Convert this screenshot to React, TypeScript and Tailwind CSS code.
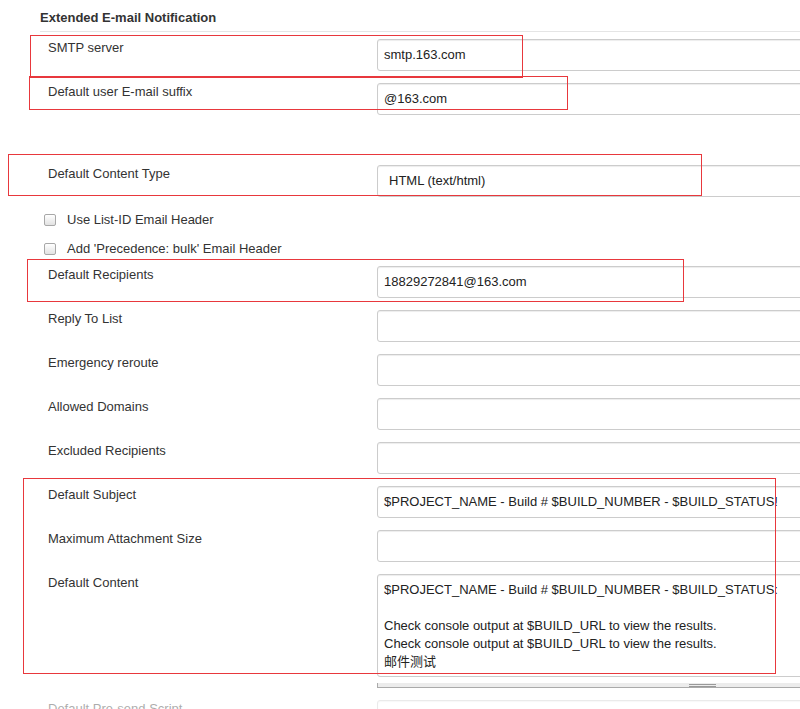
import React from 'react';

const inputCls =
  'h-[32px] flex-1 border border-[#ccc] rounded-[3px] bg-white px-[6px] flex items-center text-[#222] shadow-[inset_0_1px_1px_rgba(0,0,0,0.075)] whitespace-nowrap';

type RowProps = { label: string; value?: string; className?: string; select?: boolean };

const Row = ({ label, value, className, select }: RowProps) => (
  <div className={`flex items-start ${className ?? ''}`}>
    <div className="w-[377px] shrink-0 pl-[48px] pt-[1px] leading-[16px]">{label}</div>
    <div className={`${inputCls} ${select ? 'h-[30px] pl-[11px]' : ''}`}>{value}</div>
  </div>
);

const CheckRow = ({ label, className }: { label: string; className?: string }) => (
  <div className={`flex items-center pl-[44px] leading-[16px] ${className ?? ''}`}>
    <span className="w-[12px] h-[12px] rounded-[2px] border border-[#a8a8a8] bg-gradient-to-b from-white to-[#e2e2e2]" />
    <span className="ml-[11px]">{label}</span>
  </div>
);

// annotation boxes drawn over the form
const marks = [
  'left-[30px] top-[35px] w-[493px] h-[43px]',
  'left-[29px] top-[76px] w-[539px] h-[34px]',
  'left-[8px] top-[154px] w-[694px] h-[42px]',
  'left-[27px] top-[259px] w-[657px] h-[43px]',
  'left-[23px] top-[478px] w-[753px] h-[196px]',
];

export default function App() {
  return (
    <div className="relative w-[800px] h-[709px] overflow-hidden bg-white font-['Liberation_Sans',Arial,sans-serif] text-[13px] text-[#333]">
      <div className="w-[860px]">
        <div className="ml-[40px] pt-[10px] pb-[5px] leading-[16px] font-bold border-b border-[#e5e5e5]">
          Extended E-mail Notification
        </div>

        <Row className="mt-[7px]" label="SMTP server" value="smtp.163.com" />
        <Row className="mt-[12px]" label="Default user E-mail suffix" value="@163.com" />

        <Row className="mt-[50px]" label="Default Content Type" value="HTML (text/html)" select />

        <CheckRow className="mt-[15px]" label="Use List-ID Email Header" />
        <CheckRow className="mt-[13px]" label="Add 'Precedence: bulk' Email Header" />

        <Row className="mt-[9px]" label="Default Recipients" value="18829272841@163.com" />
        <Row className="mt-[12px]" label="Reply To List" />
        <Row className="mt-[12px]" label="Emergency reroute" />
        <Row className="mt-[12px]" label="Allowed Domains" />
        <Row className="mt-[12px]" label="Excluded Recipients" />
        <Row className="mt-[12px]" label="Default Subject" value="$PROJECT_NAME - Build # $BUILD_NUMBER - $BUILD_STATUS!" />
        <Row className="mt-[12px]" label="Maximum Attachment Size" />

        <div className="flex items-start mt-[12px]">
          <div className="w-[377px] shrink-0 pl-[48px] pt-[1px] leading-[16px]">Default Content</div>
          <div className="flex-1">
            <div className="h-[103px] border border-[#ccc] rounded-[3px] px-[6px] pt-[6px] leading-[18px] text-[#222] shadow-[inset_0_1px_1px_rgba(0,0,0,0.075)] whitespace-nowrap">
              <div>$PROJECT_NAME - Build # $BUILD_NUMBER - $BUILD_STATUS:</div>
              <div className="h-[18px]" />
              <div>Check console output at $BUILD_URL to view the results.</div>
              <div>Check console output at $BUILD_URL to view the results.</div>
              <div className="font-['Liberation_Sans','Noto_Sans_CJK_SC',sans-serif]">邮件测试</div>
            </div>
            <div className="relative mt-[6px] h-[5px] bg-[#ececec] border-l border-b border-[#aaa]">
              <div className="absolute left-[311px] top-[1px] w-[27px] h-[3px] border-t border-b border-[#999]" />
            </div>
          </div>
        </div>

        <div className="flex items-start mt-[12px] opacity-40">
          <div className="w-[377px] shrink-0 pl-[48px] pt-[1px] leading-[16px]">Default Pre-send Script</div>
          <div className={inputCls} />
        </div>
      </div>

      {marks.map((m, i) => (
        <div key={i} className={`absolute border border-[#e8383d] ${m}`} />
      ))}
    </div>
  );
}
